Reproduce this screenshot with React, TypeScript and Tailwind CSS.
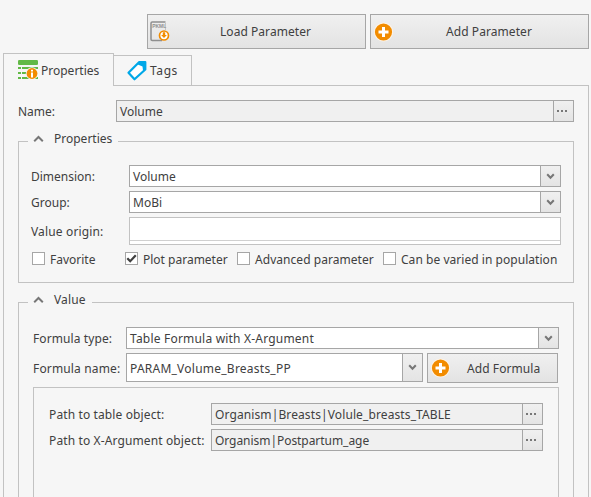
import React from "react";

function Dots() {
  return (
    <svg width="12" height="2" viewBox="0 0 12 2" shapeRendering="crispEdges" className="-ml-[3px]">
      <path d="M1 0h2v2h-2zM5 0h2v2h-2zM9 0h2v2h-2z" fill="#777" />
    </svg>
  );
}

function Chevron() {
  return (
    <svg width="9" height="7" viewBox="0 0 9 7" fill="none">
      <path d="M1.2 1.2l3.3 3.6l3.3-3.6" stroke="#777" strokeWidth="2" />
    </svg>
  );
}

function Plus() {
  return (
    <svg width="20" height="20" viewBox="0 0 20 20">
      <circle cx="10.5" cy="10" r="9.6" fill="#fdf3e6" />
      <circle cx="10.5" cy="10" r="8.6" fill="#f28c00" />
      <path d="M9 5h3v3.5h3.5v3H12V15H9v-3.500H5.500v-3H9z" fill="#fff" />
    </svg>
  );
}

function PkmlIcon() {
  return (
    <svg width="20" height="21" viewBox="0 0 20 21" fill="none">
      <path d="M15.500 2V9" stroke="#c4c4c4" strokeWidth="1" />
      <path d="M12 19.500H2.200Q1 19.500 1 18.300V2.200Q1 1 2.200 1H15.500" stroke="#8f8f8f" strokeWidth="1.5" />
      <text x="2.200" y="7.300" fontSize="5.200" fontWeight="700" fill="#8f8f8f" fontFamily="Liberation Sans, sans-serif" textLength="14" lengthAdjust="spacingAndGlyphs">PKML</text>
      <circle cx="14" cy="14.500" r="4.500" fill="#fff" stroke="#f28c00" strokeWidth="1.700" />
      <path d="M12.800 11.300h2.400v2.600h1.700L14 17l-2.900-3.100h1.700z" fill="#f28c00" />
    </svg>
  );
}

function ListIcon() {
  return (
    <svg width="21" height="20" viewBox="0 0 21 20">
      <rect x="0" y="0" width="20" height="5" rx="1.3" fill="#62b946" />
      <path d="M0 7h3v2H0zM4 7h16v2H4zM0 12h3v2H0zM4 12h16v2H4zM0 17h3v2H0zM4 17h16v2H4z" fill="#62b946" />
      <circle cx="14" cy="13.5" r="6.2" fill="#f6f6f6" />
      <circle cx="14" cy="13.5" r="5.4" fill="#f28c00" />
      <path d="M13 9.8h2v1.8h-2zM13 12.4h2v5h-2z" fill="#fff" />
    </svg>
  );
}

function TagIcon() {
  return (
    <svg width="20" height="20" viewBox="0 0 20 20">
      <path d="M12 1.200H18.300V8.500L7.500 18.300L1.500 11.800Z" fill="#fff" stroke="#00a8e8" strokeWidth="2.200" strokeLinejoin="round" />
      <path d="M12 1h6.800v7.500l-2.700 1.800l-.6-4.700l-4.700-2z" fill="#00a8e8" />
    </svg>
  );
}

type FieldProps = {
  text?: string;
  kind?: "select" | "browse";
  className: string;
  textClass?: string;
};

function Field({ text, kind = "select", className, textClass = "" }: FieldProps) {
  return (
    <div className={`flex shrink-0 border border-[#a6a6a6] ${kind === "select" ? "bg-white" : "bg-[#f0f0f0]"} ${className}`}>
      <div className="flex min-w-0 flex-1 items-center pl-[3px]">
        <span className={`whitespace-nowrap pt-[2px] ${textClass}`}>{text}</span>
      </div>
      <div className="flex w-5 shrink-0 items-center justify-center border-l border-[#a6a6a6] bg-linear-to-b from-[#f0f0f0] to-[#e4e4e4]">
        {kind === "select" ? <Chevron /> : <Dots />}
      </div>
    </div>
  );
}

function Label({ text, className, textClass = "" }: { text: string; className: string; textClass?: string }) {
  return (
    <div className={`shrink-0 whitespace-nowrap ${className}`}>
      <span className={`block pt-[2px] ${textClass}`}>{text}</span>
    </div>
  );
}

function Button({ icon, text, className, textBox }: { icon: React.ReactNode; text: string; className: string; textBox: string }) {
  return (
    <button className={`flex shrink-0 items-center border border-[#a6a6a6] bg-linear-to-b from-[#f0f0f0] to-[#e3e3e3] ${className}`}>
      {icon}
      <span className={`whitespace-nowrap ${textBox}`}>{text}</span>
    </button>
  );
}

function Check({ text, checked, className, textClass = "" }: { text: string; checked?: boolean; className: string; textClass?: string }) {
  return (
    <div className={`flex shrink-0 items-center ${className}`}>
      <div className="h-[13px] w-[13px] shrink-0 border border-[#a6a6a6] bg-white">
        {checked && (
          <svg width="11" height="11" viewBox="0 0 11 11" fill="none">
            <path d="M1.3 5.2L4.2 8.2L9.8 2.2" stroke="#404040" strokeWidth="2.2" />
          </svg>
        )}
      </div>
      <span className={`ml-[5px] whitespace-nowrap pt-[2px] ${textClass}`}>{text}</span>
    </div>
  );
}

function Legend({ text, className, textClass = "" }: { text: string; className: string; textClass?: string }) {
  return (
    <legend className={`ml-[9px] h-[17px] ${className}`}>
      <div className="-mt-[3px] flex h-[17px] items-center pl-[5px]">
        <svg width="11" height="8" viewBox="0 0 11 8" fill="none">
          <path d="M1.200 6.200l4.300-4.200l4.300 4.200" stroke="#777" strokeWidth="2" />
        </svg>
        <span className={`ml-[10px] whitespace-nowrap ${textClass}`}>{text}</span>
      </div>
    </legend>
  );
}

export default function App() {
  return (
    <div className="flex h-[497px] w-[591px] flex-col overflow-hidden bg-[#f6f6f6] pt-[14px] font-['Noto_Sans',sans-serif] text-[12px] leading-4 text-[#404040]">
      <div className="flex h-[35px] shrink-0 gap-1 pl-[147px]">
        <Button icon={<PkmlIcon />} text="Load Parameter" className="h-[35px] w-[219px] pl-[2px]" textBox="ml-[50px] tracking-[0.05px]" />
        <Button icon={<Plus />} text="Add Parameter" className="h-[35px] w-[219px] pl-[2px]" textBox="ml-[53px] tracking-[0.07px]" />
      </div>

      <div className="mt-1 flex h-[33px] shrink-0 pl-[3px]">
        <div className="flex w-[111px] shrink-0 items-center border border-b-0 border-[#c2c2c2] pl-[14px]">
          <ListIcon />
          <span className="ml-[2px] pt-px">Properties</span>
        </div>
        <div className="mt-[2px] flex w-[78px] shrink-0 items-center border-y border-r border-[#c2c2c2] pl-[13px]">
          <TagIcon />
          <span className="ml-[3px] tracking-[0.6px]">Tags</span>
        </div>
        <div className="w-[397px] border-b border-[#c2c2c2]" />
      </div>

      <div className="ml-[3px] flex w-[586px] flex-1 flex-col border-x border-[#c2c2c2] pl-[14px] pt-[14px]">
        <div className="flex h-[22px] shrink-0 items-center">
          <Label text="Name:" className="w-[98px]" />
          <Field text="Volume" kind="browse" className="h-[22px] w-[458px]" />
        </div>

        <fieldset className="mt-[11px] h-[150px] w-[556px] shrink-0 border border-[#c2c2c2]">
          <Legend text="Properties" className="w-[90px]" />
          <div className="flex flex-col gap-1 pl-[12px] pt-[15px]">
            <div className="flex h-[22px] items-center">
              <Label text="Dimension:" className="w-[98px]" />
              <Field text="Volume" className="h-[22px] w-[432px]" />
            </div>
            <div className="flex h-[22px] items-center">
              <Label text="Group:" className="w-[98px]" />
              <Field text="MoBi" className="h-[22px] w-[432px]" />
            </div>
            <div className="flex h-[28px] items-center">
              <Label text="Value origin:" className="w-[98px]" textClass="tracking-[0.15px]" />
              <div className="h-[28px] w-[432px] border border-[#c2c2c2] bg-white">
                <div className="h-[23px] border-b border-[#d0d0d0]" />
              </div>
            </div>
          </div>
          <div className="mt-[7px] flex h-[13px] items-center pl-[13px]">
            <Check text="Favorite" className="w-[93px]" />
            <Check text="Plot parameter" checked className="w-[112px]" />
            <Check text="Advanced parameter" className="w-[146px]" textClass="tracking-[0.05px]" />
            <Check text="Can be varied in population" className="w-[180px]" textClass="tracking-[0.04px]" />
          </div>
        </fieldset>

        <fieldset className="mt-[11px] h-[230px] w-[556px] shrink-0 border border-[#c2c2c2]">
          <Legend text="Value" className="w-[64px]" textClass="tracking-[0.15px]" />
          <div className="flex flex-col gap-1 pl-[14px] pt-[16px]">
            <div className="flex h-[22px] items-center">
              <Label text="Formula type:" className="w-[93px]" textClass="tracking-[0.1px]" />
              <Field text="Table Formula with X-Argument" className="h-[22px] w-[433px]" textClass="tracking-[0.2px]" />
            </div>
            <div className="flex h-[30px] items-start">
              <Label text="Formula name:" className="flex h-[29px] w-[93px] items-center" textClass="tracking-[0.15px]" />
              <Field text="PARAM_Volume_Breasts_PP" className="h-[29px] w-[297px]" textClass="tracking-[0.24px]" />
              <Button icon={<Plus />} text="Add Formula" className="ml-1 h-[30px] w-[131px] pl-[2px]" textBox="ml-[17px] pt-px tracking-[0.08px]" />
            </div>
            <div className="flex h-[140px] w-[526px] flex-col gap-1 border border-[#c2c2c2] pl-[15px] pt-[15px]">
              <div className="flex h-[22px] shrink-0 items-center">
                <Label text="Path to table object:" className="w-[162px]" textClass="tracking-[0.12px]" />
                <Field text="Organism|Breasts|Volule_breasts_TABLE" kind="browse" className="h-[22px] w-[332px]" textClass="tracking-[0.11px]" />
              </div>
              <div className="flex h-[22px] shrink-0 items-center">
                <Label text="Path to X-Argument object:" className="w-[162px]" textClass="tracking-[0.12px]" />
                <Field text="Organism|Postpartum_age" kind="browse" className="h-[22px] w-[332px]" textClass="-tracking-[0.05px]" />
              </div>
            </div>
          </div>
        </fieldset>
      </div>
    </div>
  );
}
